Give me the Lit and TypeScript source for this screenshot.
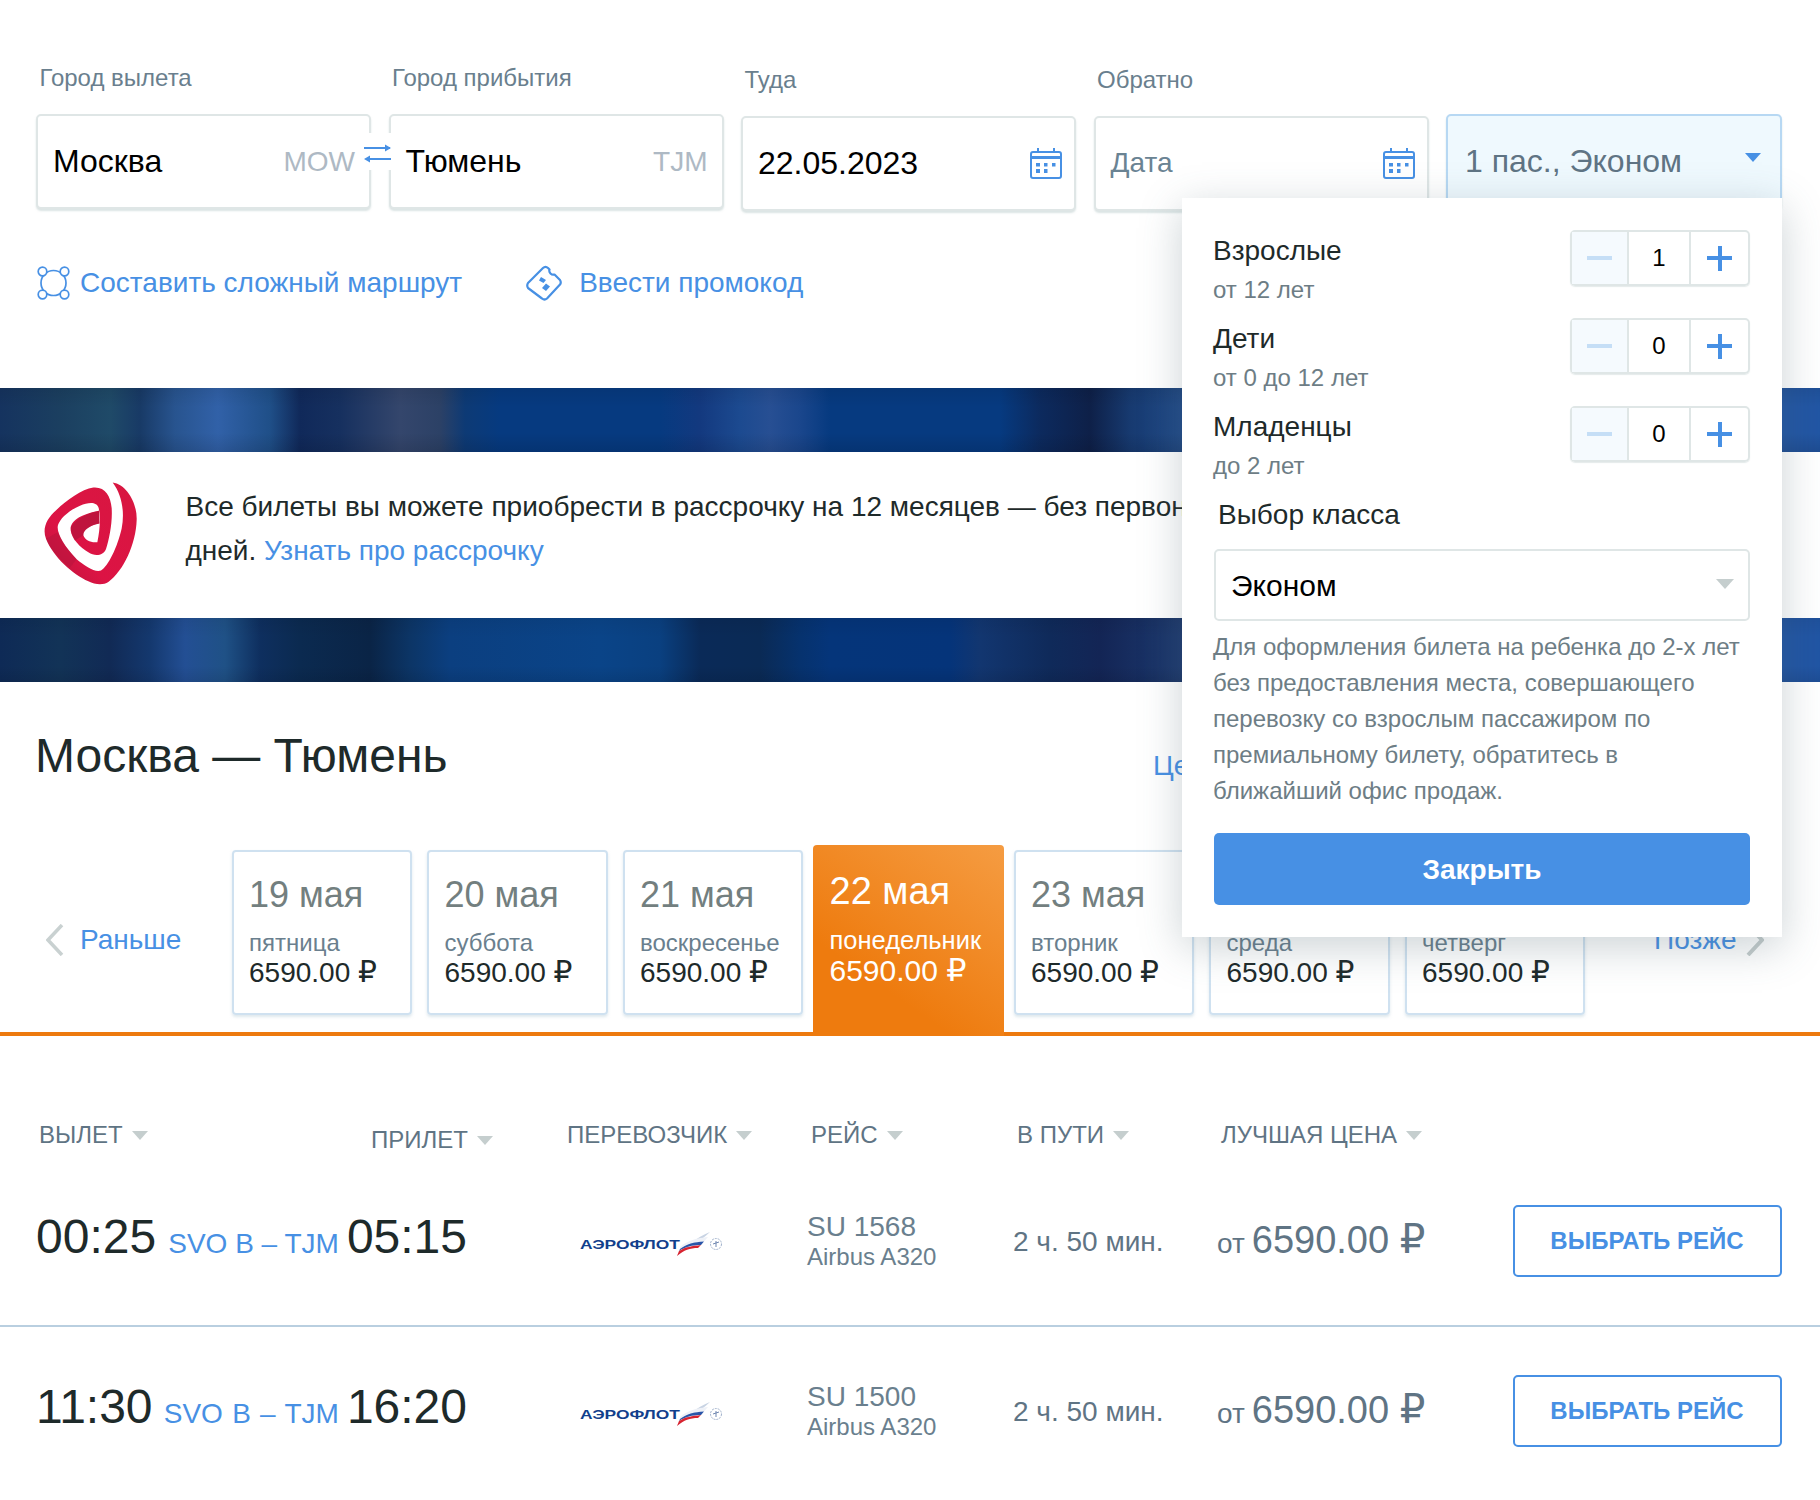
import { LitElement, html, css } from "lit";
import { customElement } from "lit/decorators.js";

const calendar = html`<svg class="cal" viewBox="0 0 32 32" width="32" height="32" fill="none">
  <rect x="1" y="5" width="30" height="26" rx="2" stroke="#4790e4" stroke-width="2"/>
  <rect x="1" y="9" width="30" height="3" fill="#4790e4"/>
  <rect x="7" y="1" width="2" height="5" fill="#4790e4"/><rect x="23" y="1" width="2" height="5" fill="#4790e4"/>
  <g fill="#4790e4"><rect x="6" y="16" width="4" height="3.500"/><rect x="14" y="16" width="3.500" height="3.500"/><rect x="22" y="16" width="3.500" height="3.500"/><rect x="6" y="22" width="4" height="4"/><rect x="14" y="22" width="3.500" height="4"/></g>
</svg>`;

const aeroflot = html`<svg class="afl" viewBox="0 0 144 24" width="144" height="24">
  <text x="0" y="17" font-family="Liberation Sans" font-weight="700" font-size="13" fill="#123f8c" textLength="100" lengthAdjust="spacingAndGlyphs">АЭРОФЛОТ</text>
  <path d="M97 24 C103 15 118 5 130 0 C124 6 118 9 114 12 C108 15 102 20 97 24Z" fill="#c9d4e4"/>
  <path d="M100 15 C108 8 118 6 128 5 L124 9.500 C114 10 106 12 100 17Z" fill="#eef1f7"/>
  <path d="M100 17 C107 12 114 10 124 9.500 L121 13 C112 13 105 15 99 19Z" fill="#2a55a8"/>
  <path d="M99 19 C105 15 112 14 121 13 L118 16 C110 16 104 18 97 24Z" fill="#d8232f"/>
  <circle cx="136" cy="12" r="5.500" fill="none" stroke="#9fb0cb" stroke-width="1" stroke-dasharray="2 1"/>
  <path d="M133 12 L139 10 M136 9 L136 15" stroke="#6f86b0" stroke-width="1"/>
</svg>`;

const logo = html`<svg class="logo" viewBox="0 0 420 390" width="140" height="133" preserveAspectRatio="none" fill="none">
  <defs><linearGradient id="sw" x1="0" y1="1" x2="1" y2="0"><stop offset="0" stop-color="#b8173d"/><stop offset=".35" stop-color="#dc1344"/><stop offset="1" stop-color="#d81740"/></linearGradient></defs>
  <path d="M278 60 C320 66 352 120 350 170 C348 240 310 320 265 352 C250 362 225 360 205 350 C160 330 100 280 78 225 C66 195 80 165 110 140 C140 112 185 80 220 75 C255 72 272 100 275 135 C278 175 268 225 258 255 C250 275 225 278 205 265 C180 250 155 225 152 200 C150 175 175 155 237 143 L238 180 C210 185 188 200 190 215 C195 230 215 238 232 235 C240 200 242 160 236 135 C230 115 205 118 180 128 C150 140 120 165 114 185 C108 205 130 245 170 285 C195 305 225 325 243 318 C265 305 292 250 305 195 C315 145 305 95 278 60Z" fill="url(#sw)"/>
  <path d="M237 143 C205 150 170 165 153 190 C152 200 155 215 165 230 L190 215 C188 200 210 185 238 180Z" fill="#a8143a" opacity=".55"/>
  <path d="M78 225 C90 255 120 285 150 310 L170 285 C150 265 125 235 114 205Z" fill="#a8143a" opacity=".35"/>
</svg>`;

const pTri = (cls = "") => html`<span class="tri ${cls}"></span>`;
const price = html`6590.00 <span class="rub">₽</span>`;

const days = [
  ["19 мая", "пятница"],
  ["20 мая", "суббота"],
  ["21 мая", "воскресенье"],
  ["22 мая", "понедельник", true],
  ["23 мая", "вторник"],
  ["24 мая", "среда"],
  ["25 мая", "четверг"],
] as [string, string, boolean?][];

const flights = [
  { dep: "00:25", arr: "05:15", no: "SU 1568", wide: false },
  { dep: "11:30", arr: "16:20", no: "SU 1500", wide: true },
];

@customElement("app-root")
export class AppRoot extends LitElement {
  static styles = css`
    :host { display: block; position: relative; width: 1820px; background: #fff; color: #1e2a2a; font-family: "Liberation Sans", Arial, sans-serif; overflow: hidden; padding-bottom: 3px; }
    * { box-sizing: border-box; }
    a { color: #4790e4; text-decoration: none; }
    .form { display: flex; gap: 17.5px; padding: 64px 38px 0 36px; }
    .col { width: 335px; flex: none; display: flex; flex-direction: column; }
    .col.low { padding-top: 1.5px; }
    .col.wide { width: 336px; }
    .lab { font-size: 24px; line-height: 28px; height: 28px; color: #6a7f8e; margin: 0 0 22px 3.5px; }
    .field { height: 95px; border: 2px solid #dfe6e6; border-radius: 5px; background: #fff; box-shadow: 0 2px 2px rgba(190,205,205,.55); display: flex; align-items: center; justify-content: space-between; padding: 0 14px 0 15px; font-size: 32px; color: #000; }
    .code { font-size: 28px; color: #aeb9c4; }
    .cal { margin-right: -2px; }
    .ph { font-size: 28px; color: #6a8393; }
    .field.pax { margin-top: 50px; height: 95px; background: #eff9fe; border-color: #b7d8f3; color: #5f7484; padding-left: 17px; padding-right: 19px; }
    .swap { position: absolute; left: 363.5px; top: 133px; width: 27px; height: 37px; background: #fff; }
    .links { display: flex; align-items: center; padding: 54px 0 0 37px; font-size: 28px; line-height: 36px; height: 90px; }
    .links a { display: flex; align-items: center; }
    .links svg { flex: none; }
    .l1 svg { margin-right: 10px; }
    .l2 { margin-left: 64px; }
    .l2 svg { margin-right: 17px; }
    .band { height: 64px; }
    .b1 { margin-top: 87.5px; background: linear-gradient(180deg, rgba(0,0,0,.08), transparent 30%, transparent 70%, rgba(0,0,10,.12)), linear-gradient(90deg, #15335f 0, #1b3f60 60px, #1f4a68 110px, #183a66 140px, #28548f 175px, #3161a8 218px, #1f4f88 270px, #10295a 300px, #16305f 340px, #34466c 400px, #2c4166 440px, #0d3a75 465px, #063a80 500px, #063a80 660px, #13397f 700px, #1c4a90 740px, #274f93 770px, #1a468c 800px, #063a80 830px, #063a80 1000px, #0c2a5e 1040px, #0e2048 1090px, #173a70 1130px, #204a88 1180px, #2256a4 1783px, #2256a4 1820px); }
    .b2 { background: linear-gradient(180deg, rgba(0,0,0,.06), transparent 30%, transparent 75%, rgba(0,0,10,.1)), linear-gradient(90deg, #0e2a56 0, #123357 60px, #112a55 110px, #14386e 150px, #234f94 185px, #1f5186 225px, #0e2f5f 260px, #0b2a50 300px, #0a2446 370px, #0c3566 410px, #0b3f80 450px, #0a4488 600px, #0a4080 660px, #0a2a58 700px, #0a2a55 760px, #06326e 800px, #05357a 830px, #05347a 950px, #123670 980px, #0f2a5a 1050px, #132555 1100px, #1d3a70 1182px, #2155a4 1783px, #2155a4 1820px); }
    .info { height: 166px; display: flex; align-items: center; padding: 0 0 13px 20px; }
    .info p { margin: 0 0 0 25.5px; font-size: 28px; line-height: 44px; white-space: nowrap; color: #1e2a2a; }
    .logo { flex: none; }
    .head { display: flex; align-items: center; padding: 46px 0 0 35px; }
    h1 { margin: 0; font-size: 48px; line-height: 56px; font-weight: 400; color: #1e2a2a; width: 412px; white-space: nowrap; }
    .tabs { margin: 20px 0 0 706px; font-size: 28px; }
    .strip { display: flex; margin-top: 61px; height: 191px; border-bottom: 4px solid #ed7a0e; align-items: flex-start; }
    .nav { height: 187px; display: flex; align-items: center; gap: 16px; font-size: 28px; padding-top: 3px; }
    .prev { width: 231.5px; flex: none; padding-left: 46px; }
    .next { padding-left: 69px; gap: 9px; }
    .days { display: flex; gap: 15px; }
    .day { width: 180.5px; height: 165px; margin-top: 5px; border: 2px solid #cfe1f0; border-radius: 4px; box-shadow: 0 2px 3px rgba(190,210,220,.5); padding: 23px 0 0 15.5px; display: flex; flex-direction: column; }
    .d { font-size: 36px; line-height: 40px; color: #737f7f; white-space: nowrap; }
    .w { font-size: 24px; line-height: 28px; color: #6a7f8e; margin-top: 14px; white-space: nowrap; }
    .p { font-size: 28px; line-height: 32px; color: #1e2a2a; white-space: nowrap; }
    .rub { font-family: "DejaVu Sans", sans-serif; font-size: 1.06em; line-height: 0; }
    .day.on { width: 190.5px; height: 191px; margin: 0 -5px; border: 0; border-radius: 4px 4px 0 0; box-shadow: none; background: linear-gradient(35deg, #ee7b0e 30%, #f59c42 100%); padding: 26px 0 0 16.5px; }
    .day.on .d, .day.on .w, .day.on .p { color: #fff; }
    .day.on .d { font-size: 38px; }
    .day.on .w { margin-top: 15px; font-size: 25.5px; }
    .day.on .p { margin-top: 1px; font-size: 30px; }
    .tri { display: inline-block; width: 0; height: 0; border-left: 8px solid transparent; border-right: 8px solid transparent; border-top: 9px solid #c5cece; }
    .tri.blue { border-top-color: #4790e4; margin-bottom: 9px; }
    .tri.big { border-left-width: 9px; border-right-width: 9px; border-top-width: 10px; }
    .th { display: grid; grid-template-columns: 332px 196px 244px 206px 204px auto; padding: 85px 0 0 39px; font-size: 24px; line-height: 28px; color: #5f7484; align-items: start; }
    .th span.c { display: flex; align-items: center; gap: 9px; white-space: nowrap; }
    .th .dn { margin-top: 5px; }
    .rows { margin-top: 3px; }
    .row { display: grid; grid-template-columns: 544px 227px 206px 204px 295.5px 269px; padding-left: 36px; height: 170px; align-items: center; border-bottom: 2px solid #b9cfe0; }
    .row:last-child { border-bottom: 0; height: 168px; }
    .times { display: flex; align-items: baseline; width: 431px; margin-bottom: 9px; }
    .t { font-size: 48px; line-height: 56px; color: #1e2a2a; }
    .r { font-size: 28px; color: #4790e4; margin-left: auto; margin-right: 8px; white-space: nowrap; }
    .r.w2 { word-spacing: 1.5px; }
    .afl { display: block; margin-top: 5px; }
    .fl { color: #6a7f8e; display: flex; flex-direction: column; margin-top: 2px; }
    .fl b { font-weight: 400; font-size: 28px; line-height: 30px; }
    .fl i { font-style: normal; font-size: 24px; line-height: 30px; }
    .dur { font-size: 28px; color: #5f7484; white-space: nowrap; margin-top: 2px; }
    .pr { display: flex; align-items: baseline; gap: 7px; color: #5f7484; font-size: 28px; margin-top: -2px; white-space: nowrap; }
    .pr > span { font-size: 38px; }
    .buy { height: 72px; width: 269px; border: 2px solid #4790e4; border-radius: 5px; color: #4790e4; background: #fff; font: 700 24px "Liberation Sans", sans-serif; display: flex; align-items: center; justify-content: center; }
    .panel { position: absolute; top: 198px; right: 38px; width: 600px; height: 739px; background: #fff; padding: 32px 32px 0; box-shadow: 0 10px 40px rgba(70,95,105,.28); }
    .pax-row { display: flex; justify-content: space-between; height: 88px; margin-left: -1px; }
    .pl { font-size: 28px; line-height: 40px; color: #1e2a2a; margin: 1px 0 -1px; }
    .ps { font-size: 24px; line-height: 40px; color: #6d7d85; }
    .st { display: flex; width: 180px; height: 56px; border: 2px solid #dfe6e6; border-radius: 5px; box-shadow: 0 1px 1px rgba(190,205,205,.4); font-size: 24px; color: #000; }
    .st > div { display: flex; align-items: center; justify-content: center; }
    .st .m { width: 57px; background: #f5fafe; border-right: 2px solid #dfe6e6; }
    .st .v { width: 62px; border-right: 2px solid #dfe6e6; }
    .st .a { flex: 1; }
    .bar { display: block; width: 25px; height: 4px; background: #c5def6; }
    .plus { display: block; width: 25px; height: 25px; background: linear-gradient(#4790e4,#4790e4) center/25px 4px no-repeat, linear-gradient(#4790e4,#4790e4) center/4px 25px no-repeat; }
    .cl { font-size: 28px; line-height: 40px; margin: 1px 0 0 4px; color: #1e2a2a; }
    .sel { margin-top: 14px; height: 72px; width: 536px; border: 2px solid #dfe6e6; border-radius: 5px; display: flex; align-items: center; justify-content: space-between; padding: 2px 14px 0 15px; font-size: 30px; color: #000; }
    .sel .tri { margin-bottom: 4px; }
    .note { margin: 8px 0 0 -1px; font-size: 24px; line-height: 36px; color: #6d7d85; width: 537px; white-space: nowrap; }
    .close { margin-top: 24px; height: 72px; width: 536px; background: #4790e4; border: 0; border-radius: 5px; color: #fff; font: 700 28px "Liberation Sans", sans-serif; display: flex; align-items: center; justify-content: center; padding-top: 2px; }
  `;

  private step(v: number) {
    return html`<div class="st"><div class="m"><span class="bar"></span></div><div class="v">${v}</div><div class="a"><span class="plus"></span></div></div>`;
  }

  private row(dep: string, arr: string, no: string, wide = false) {
    return html`<div class="row">
      <div class="times"><span class="t">${dep}</span><span class="r ${wide ? "w2" : ""}">SVO B – TJM</span><span class="t">${arr}</span></div>
      <div>${aeroflot}</div>
      <div class="fl"><b>${no}</b><i>Airbus A320</i></div>
      <div class="dur">2 ч. 50 мин.</div>
      <div class="pr">от <span>${price}</span></div>
      <button class="buy">ВЫБРАТЬ РЕЙС</button>
    </div>`;
  }

  render() {
    return html`
      <div class="form">
        <div class="col"><div class="lab">Город вылета</div><div class="field">Москва<span class="code">MOW</span></div></div>
        <div class="col"><div class="lab">Город прибытия</div><div class="field">Тюмень<span class="code">TJM</span></div></div>
        <div class="col low"><div class="lab">Туда</div><div class="field">22.05.2023 ${calendar}</div></div>
        <div class="col low"><div class="lab">Обратно</div><div class="field"><span class="ph">Дата</span>${calendar}</div></div>
        <div class="col wide"><div class="field pax">1 пас., Эконом ${pTri("blue")}</div></div>
      </div>
      <div class="swap"><svg viewBox="0 0 27 37" width="27" height="37" fill="none">
        <path d="M0 15H26" stroke="#4790e4" stroke-width="2"/><path d="M27 15L21 11.500V18.500Z" fill="#4790e4"/>
        <path d="M2 26H27" stroke="#4790e4" stroke-width="2"/><path d="M0 26L6 22.500V29.500Z" fill="#4790e4"/>
      </svg></div>
      <div class="links">
        <a class="l1" href="#"><svg viewBox="0 0 33 34" width="33" height="34" fill="#fff" stroke="#4790e4" stroke-width="1.700">
          <circle cx="16.500" cy="17" r="12.500" fill="none"/>
          <circle cx="5.500" cy="5.500" r="4.300"/><circle cx="27.500" cy="5.500" r="4.300"/><circle cx="5.500" cy="28.500" r="4.300"/><circle cx="27.500" cy="28.500" r="4.300"/>
        </svg>Составить сложный маршрут</a>
        <a class="l2" href="#"><svg viewBox="0 0 36 36" width="36" height="36" fill="none" stroke="#4790e4" stroke-width="2.200" stroke-linejoin="round">
          <path d="M17 3Q19.500 .500 22 3L23.500 4.500C22.500 7.500 25.500 10.500 28.500 9.500L34 15Q35.500 17.500 34 19.500L21 33.500Q18.500 35.500 16 33.500L2 23Q.500 20.500 2 18Z"/>
          <path d="M15 12L20 15L17.500 18L13 15.500ZM20 18.500L24 21.500L20 26L16 23Z" fill="#4790e4" stroke="none"/>
        </svg>Ввести промокод</a>
      </div>
      <div class="band b1"></div>
      <div class="info">${logo}<p>Все билеты вы можете приобрести в рассрочку на 12 месяцев — без первоначального взноса<br>дней. <a href="#">Узнать про рассрочку</a></p></div>
      <div class="band b2"></div>
      <div class="head"><h1>Москва — Тюмень</h1><a class="tabs" href="#">Цены</a></div>
      <div class="strip">
        <a class="nav prev" href="#"><svg viewBox="0 0 18 32" width="18" height="32" fill="none"><path d="M16 1L2 16L16 31" stroke="#c9d1d1" stroke-width="3.500"/></svg>Раньше</a>
        <div class="days">
          ${days.map(([d, w, on]) => html`<div class="day ${on ? "on" : ""}"><div class="d">${d}</div><div class="w">${w}</div><div class="p">${price}</div></div>`)}
        </div>
        <a class="nav next" href="#">Позже<svg viewBox="0 0 18 32" width="18" height="32" fill="none"><path d="M2 1L16 16L2 31" stroke="#c5cdcd" stroke-width="4"/></svg></a>
      </div>
      <div class="th">
        <span class="c">ВЫЛЕТ ${pTri()}</span>
        <span class="c dn">ПРИЛЕТ ${pTri()}</span>
        <span class="c">ПЕРЕВОЗЧИК ${pTri()}</span>
        <span class="c">РЕЙС ${pTri()}</span>
        <span class="c">В ПУТИ ${pTri()}</span>
        <span class="c">ЛУЧШАЯ ЦЕНА ${pTri()}</span>
      </div>
      <div class="rows">
        ${flights.map((f) => this.row(f.dep, f.arr, f.no, f.wide))}
      </div>
      <div class="panel">
        <div class="pax-row"><div><div class="pl">Взрослые</div><div class="ps">от 12 лет</div></div>${this.step(1)}</div>
        <div class="pax-row"><div><div class="pl">Дети</div><div class="ps">от 0 до 12 лет</div></div>${this.step(0)}</div>
        <div class="pax-row"><div><div class="pl">Младенцы</div><div class="ps">до 2 лет</div></div>${this.step(0)}</div>
        <div class="cl">Выбор класса</div>
        <div class="sel">Эконом ${pTri("big")}</div>
        <p class="note">Для оформления билета на ребенка до 2-х лет<br>без предоставления места, совершающего<br>перевозку со взрослым пассажиром по<br>премиальному билету, обратитесь в<br>ближайший офис продаж.</p>
        <button class="close">Закрыть</button>
      </div>
    `;
  }
}
